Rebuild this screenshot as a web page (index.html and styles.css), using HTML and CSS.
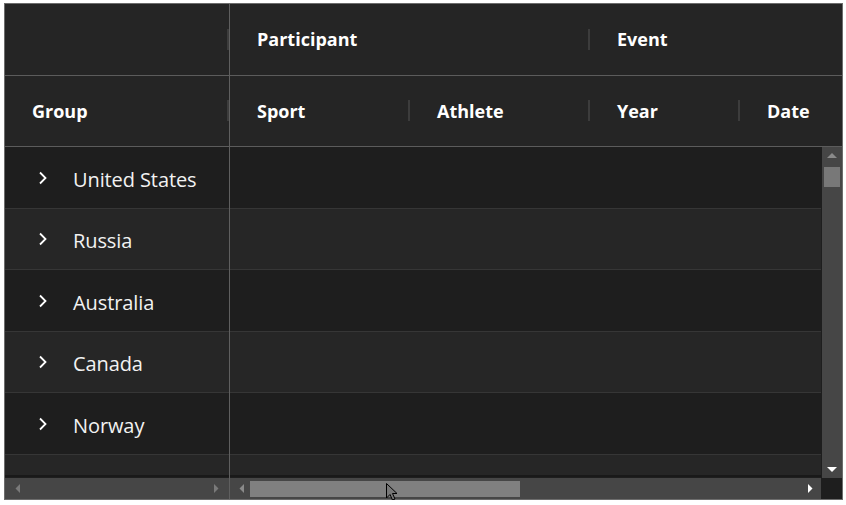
FILE: index.html
```html
<!DOCTYPE html>
<html>
<head>
<meta charset="utf-8">
<link rel="stylesheet" href="styles.css">
</head>
<body>
<div class="grid">
  <div class="head">
    <div class="head-frozen">
      <div class="hrow hrow1"><div class="hcell c-group"><span class="grip"></span></div></div>
      <div class="hrow hrow2"><div class="hcell c-group">Group<span class="grip"></span></div></div>
    </div>
    <div class="head-scroll">
      <div class="hrow hrow1">
        <div class="hcell c-part">Participant<span class="grip"></span></div>
        <div class="hcell c-rest">Event</div>
      </div>
      <div class="hrow hrow2">
        <div class="hcell c-sport">Sport<span class="grip"></span></div>
        <div class="hcell c-athlete">Athlete<span class="grip"></span></div>
        <div class="hcell c-year">Year<span class="grip"></span></div>
        <div class="hcell c-rest">Date</div>
      </div>
    </div>
  </div>
  <div class="body">
    <div class="body-frozen">
      <div class="row r-odd"><svg class="chev" width="10" height="14" viewBox="0 0 10 14"><polyline points="2,1.5 7.5,7 2,12.5" fill="none" stroke="#fff" stroke-width="1.8"/></svg><span class="label">United States</span></div>
      <div class="row r-even"><svg class="chev" width="10" height="14" viewBox="0 0 10 14"><polyline points="2,1.5 7.5,7 2,12.5" fill="none" stroke="#fff" stroke-width="1.8"/></svg><span class="label">Russia</span></div>
      <div class="row r-odd"><svg class="chev" width="10" height="14" viewBox="0 0 10 14"><polyline points="2,1.5 7.5,7 2,12.5" fill="none" stroke="#fff" stroke-width="1.8"/></svg><span class="label">Australia</span></div>
      <div class="row r-even"><svg class="chev" width="10" height="14" viewBox="0 0 10 14"><polyline points="2,1.5 7.5,7 2,12.5" fill="none" stroke="#fff" stroke-width="1.8"/></svg><span class="label">Canada</span></div>
      <div class="row r-odd"><svg class="chev" width="10" height="14" viewBox="0 0 10 14"><polyline points="2,1.5 7.5,7 2,12.5" fill="none" stroke="#fff" stroke-width="1.8"/></svg><span class="label">Norway</span></div>
      <div class="row r-even r-last"></div>
    </div>
    <div class="body-scroll">
      <div class="row r-odd"></div>
      <div class="row r-even"></div>
      <div class="row r-odd"></div>
      <div class="row r-even"></div>
      <div class="row r-odd"></div>
      <div class="row r-even r-last"></div>
    </div>
    <div class="vscroll">
      <svg class="arr" width="20" height="16" viewBox="0 0 20 16"><polygon points="5,11 15,11 10,6" fill="#8a8a8a"/></svg>
      <div class="vthumb"></div>
      <div class="vspace"></div>
      <svg class="arr" width="20" height="16" viewBox="0 0 20 16"><polygon points="5,5 15,5 10,10" fill="#fff"/></svg>
    </div>
  </div>
  <div class="hbar">
    <div class="hbar-frozen">
      <svg width="16" height="20" viewBox="0 0 16 20"><polygon points="10,5 10,14 5.5,9.5" fill="#7a7a7a"/></svg>
      <svg width="16" height="20" viewBox="0 0 16 20"><polygon points="5,5 5,14 9.5,9.5" fill="#7a7a7a"/></svg>
    </div>
    <div class="hbar-scroll">
      <svg width="16" height="20" viewBox="0 0 16 20"><polygon points="10,5 10,14 5.5,9.5" fill="#8a8a8a"/></svg>
      <div class="hthumb"></div>
      <div class="hspace"></div>
      <svg width="16" height="20" viewBox="0 0 16 20"><polygon points="5,5 5,14 9.5,9.5" fill="#fff"/></svg>
    </div>
    <div class="corner"></div>
  </div>
  <svg class="cursor" width="14" height="20" viewBox="0 0 14 20"><path d="M0.5,0.5 L0.5,15 L4,11.5 L6.5,17 L9,16 L6.5,10.5 L11,10.5 Z" fill="#777" stroke="#000" stroke-width="1"/></svg>
</div>
</body>
</html>
```

FILE: styles.css
```css
* { box-sizing: border-box; }
html, body { margin: 0; padding: 0; background: #fff; }
body { padding: 3px 0 0 4px; font-family: "Open Sans", "Noto Sans", sans-serif; }

.grid {
  position: relative;
  width: 839px;
  height: 497px;
  border: 1px solid #6c6c6c;
  background: #1e1e1e;
  display: flex;
  flex-direction: column;
}

.head { display: flex; background: #252525; }
.head-frozen { width: 225px; border-right: 1px solid #5f5f5f; }
.head-scroll { flex: 1; }
.hrow { display: flex; border-bottom: 1px solid #5c5c5c; }
.hrow1 { height: 72px; }
.hrow2 { height: 71px; }

.hcell {
  position: relative;
  display: flex;
  align-items: center;
  padding-left: 27px;
  color: #fff;
  font-weight: 700;
  font-size: 18px;
  letter-spacing: 0;
}
.hrow1 .hcell { padding-bottom: 1px; }
.c-group { width: 224px; }
.c-part { width: 360px; }
.c-sport { width: 180px; }
.c-athlete { width: 180px; }
.c-year { width: 150px; }
.c-rest { flex: 1; }

.grip {
  position: absolute;
  right: 0;
  top: 50%;
  width: 2px;
  height: 21px;
  margin-top: -11px;
  background: #3c3c3c;
}

.body { display: flex; height: 331px; }
.body-frozen { width: 225px; border-right: 1px solid #5f5f5f; overflow: hidden; }
.body-scroll { width: 591px; overflow: hidden; }
.vscroll {
  width: 20px;
  margin-left: 1px;
  background: #464646;
  display: flex;
  flex-direction: column;
  align-items: center;
}
.vscroll .arr { flex: none; }
.vthumb { width: 16px; height: 20px; background: #787878; margin-top: 4px; }
.vspace { flex: 1; }

.row {
  height: 61.5px;
  border-bottom: 1px solid #363636;
  display: flex;
  align-items: center;
}
.r-odd { background: #1e1e1e; }
.r-even { background: #262626; }
.r-last { height: 22px; border-bottom: 2px solid #191919; }

.chev { margin-left: 33px; margin-top: 1px; flex: none; }
.label {
  margin-left: 25px;
  margin-top: 4px;
  color: #f2f2f2;
  font-size: 20px;
  letter-spacing: -0.1px;
}

.hbar { display: flex; height: 21px; }
.hbar-frozen {
  width: 225px;
  border-right: 1px solid #5f5f5f;
  background: #464646;
  display: flex;
  align-items: center;
  justify-content: space-between;
  padding: 0 4px 0 5px;
}
.hbar-scroll {
  width: 591px;
  background: #464646;
  display: flex;
  align-items: center;
  padding: 0 2px 0 4px;
}
.hthumb { width: 270px; height: 16px; background: #808080; }
.hspace { flex: 1; }
.corner { flex: 1; background: #1e1e1e; }

.cursor { position: absolute; left: 381px; top: 479px; }
```
